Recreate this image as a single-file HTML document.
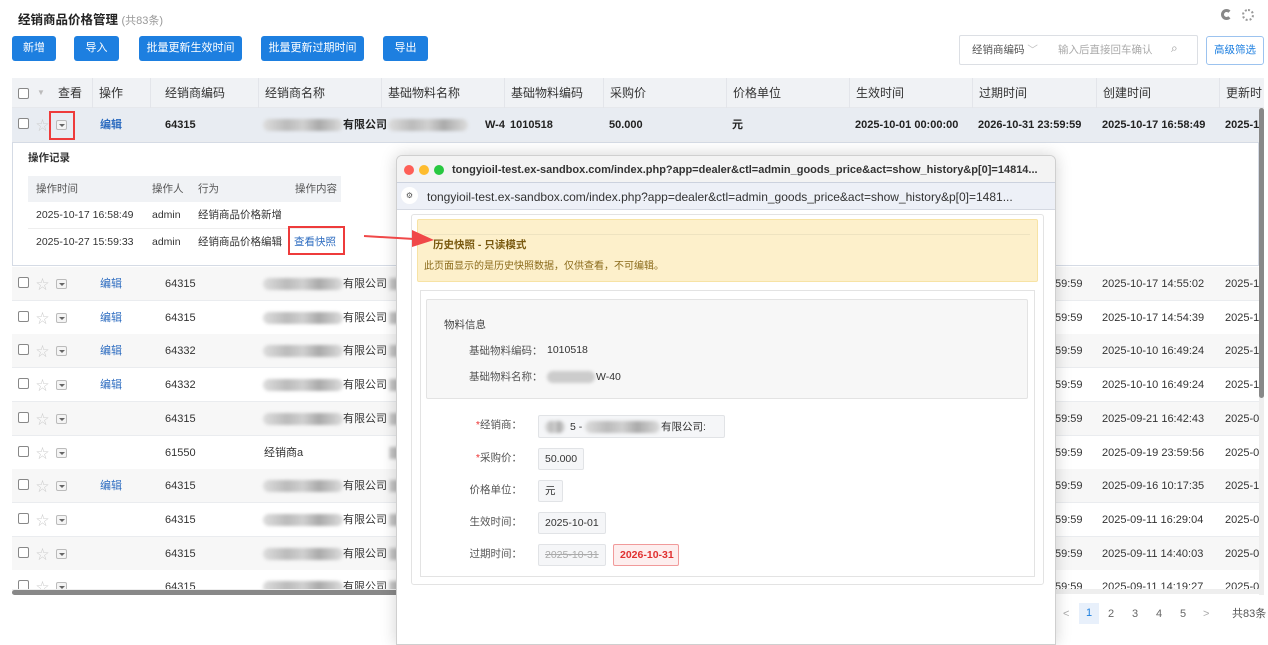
<!DOCTYPE html>
<html><head><meta charset="utf-8"><style>
*{box-sizing:border-box;margin:0;padding:0}
body{width:1268px;height:636px;overflow:hidden;background:#fff;font-family:"Liberation Sans","Noto Sans CJK SC",sans-serif;font-size:11px;color:#333;position:relative}
.a{position:absolute;white-space:nowrap;line-height:14px}
.btn{position:absolute;top:36px;height:25px;background:#1d7fe0;color:#fff;border-radius:3px;font-size:11px;line-height:25px;text-align:center}
.hd{position:absolute;top:78px;left:12px;width:1252px;height:30px;background:#f0f2f5;border-bottom:1px solid #e6e8ec}
.th{position:absolute;top:78px;height:30px;line-height:30px;font-size:12px;color:#333;border-left:1px solid #e3e5ea;padding-left:6px}
.row{position:absolute;left:12px;width:1247px;height:34px;border-bottom:1px solid #eaecef}
.cb{position:absolute;width:11px;height:11px;border:1px solid #888;border-radius:2px;background:#fff}
.star{position:absolute;color:#ccc;font-size:13px}
.dd{position:absolute;width:11px;height:10px;border:1px solid #bbb;border-radius:2px;background:#f4f4f4}
.dd:after{content:"";position:absolute;left:2px;top:3px;border-left:3px solid transparent;border-right:3px solid transparent;border-top:3px solid #666}
.blur{position:absolute;height:12px;background:linear-gradient(90deg,#ddd,#bbb 30%,#d0d0d0 50%,#aaa 70%,#ddd);filter:blur(1.5px);border-radius:6px}
.ed{color:#2d6cc0}
.b{font-weight:600;color:#222}
.fl{position:absolute;font-size:10.5px;color:#555;text-align:right;width:80px;line-height:14px}
.fv{position:absolute;height:22px;border:1px solid #e1e3e6;background:#f5f6f8;border-radius:2px;line-height:20px;padding:0 6px;font-size:10.5px;color:#333}
</style></head><body>
<div class="a" style="left:18px;top:13px;font-size:12.5px;font-weight:bold;color:#222">经销商品价格管理 <span style="font-weight:normal;color:#999;font-size:11px">(共83条)</span></div>
<div class="a" style="left:1221px;top:9px;width:11px;height:11px;border-radius:50%;border:3px solid #888;border-right-color:transparent"></div>
<div class="a" style="left:1242px;top:9px;width:12px;height:12px;border-radius:50%;border:2px dotted #999"></div>
<div class="btn" style="left:12px;width:44px">新增</div>
<div class="btn" style="left:74px;width:45px">导入</div>
<div class="btn" style="left:139px;width:103px">批量更新生效时间</div>
<div class="btn" style="left:261px;width:103px">批量更新过期时间</div>
<div class="btn" style="left:383px;width:45px">导出</div>
<div class="a" style="left:959px;top:35px;width:239px;height:30px;border:1px solid #dcdfe4;border-radius:2px"></div>
<div class="a" style="left:972px;top:43px;color:#555;font-size:10.5px">经销商编码 <span style="color:#bbb">﹀</span></div>
<div class="a" style="left:1058px;top:43px;color:#aaa;font-size:10.5px">输入后直接回车确认</div>
<div class="a" style="left:1171px;top:41px;color:#999;font-size:12px">⌕</div>
<div class="a" style="left:1206px;top:36px;width:58px;height:29px;border:1px solid #9cc3ef;border-radius:3px;color:#1d7fe0;line-height:27px;text-align:center;font-size:10.5px">高级筛选</div>

<div class="hd"></div>
<div class="cb" style="left:18px;top:88px"></div><div class="a" style="left:37px;top:86px;color:#bbb;font-size:8px">▼</div>
<div class="th" style="left:44px;border:0;padding-left:14px">查看</div>
<div class="th" style="left:92px">操作</div>
<div class="th" style="left:150px;padding-left:14px">经销商编码</div>
<div class="th" style="left:258px">经销商名称</div>
<div class="th" style="left:381px">基础物料名称</div>
<div class="th" style="left:504px">基础物料编码</div>
<div class="th" style="left:603px">采购价</div>
<div class="th" style="left:726px">价格单位</div>
<div class="th" style="left:849px">生效时间</div>
<div class="th" style="left:972px">过期时间</div>
<div class="th" style="left:1096px">创建时间</div>
<div class="th" style="left:1219px">更新时</div>

<div class="row" style="top:108px;background:#e8ecf2;height:34px"></div>
<div class="cb" style="left:18px;top:118px"></div><div class="star" style="left:36px;top:115px">☆</div><div class="dd" style="left:56px;top:120px"></div>
<div class="a b" style="top:118px;left:100px;color:#2d6cc0">编辑</div>
<div class="a b" style="top:118px;left:165px">64315</div>
<div class="blur" style="left:263px;top:119px;width:80px"></div><div class="a b" style="top:118px;left:343px">有限公司</div>
<div class="blur" style="left:388px;top:119px;width:80px"></div><div class="a b" style="top:118px;left:485px">W-4</div>
<div class="a b" style="top:118px;left:510px">1010518</div>
<div class="a b" style="top:118px;left:609px">50.000</div>
<div class="a b" style="top:118px;left:732px">元</div>
<div class="a b" style="top:118px;left:855px">2025-10-01 00:00:00</div>
<div class="a b" style="top:118px;left:978px">2026-10-31 23:59:59</div>
<div class="a b" style="top:118px;left:1102px">2025-10-17 16:58:49</div>
<div class="a b" style="top:118px;left:1225px">2025-1</div>
<div class="a" style="left:49px;top:111px;width:26px;height:29px;border:2px solid #ee3b3b"></div>

<div class="a" style="left:12px;top:142px;width:1247px;height:124px;border:1px solid #d5dbe5;background:#fff"></div>
<div class="a" style="left:28px;top:151px;font-weight:bold;font-size:10.5px">操作记录</div>
<div class="a" style="left:28px;top:176px;width:313px;height:26px;background:#f0f2f5"></div>
<div class="a" style="left:36px;top:182px;font-size:10.5px;color:#555">操作时间</div>
<div class="a" style="left:152px;top:182px;font-size:10.5px;color:#555">操作人</div>
<div class="a" style="left:198px;top:182px;font-size:10.5px;color:#555">行为</div>
<div class="a" style="left:295px;top:182px;font-size:10.5px;color:#555">操作内容</div>
<div class="a" style="left:28px;top:228px;width:313px;border-top:1px solid #eee"></div>
<div class="a" style="left:36px;top:208px;font-size:10.5px">2025-10-17 16:58:49</div><div class="a" style="left:152px;top:208px;font-size:10.5px">admin</div><div class="a" style="left:198px;top:208px;font-size:10.5px">经销商品价格新增</div>
<div class="a" style="left:36px;top:235px;font-size:10.5px">2025-10-27 15:59:33</div><div class="a" style="left:152px;top:235px;font-size:10.5px">admin</div><div class="a" style="left:198px;top:235px;font-size:10.5px">经销商品价格编辑</div>
<div class="a ed" style="left:294px;top:235px;font-size:10.5px">查看快照</div>
<div class="a" style="left:288px;top:226px;width:57px;height:29px;border:2px solid #ee3b3b"></div>

<div id="rows"></div>
<script>
var d=[["64315",1,"2025-10-17 14:55:02","2025-1"],["64315",1,"2025-10-17 14:54:39","2025-1"],["64332",1,"2025-10-10 16:49:24","2025-1"],["64332",1,"2025-10-10 16:49:24","2025-1"],["64315",0,"2025-09-21 16:42:43","2025-0"],["61550",0,"2025-09-19 23:59:56","2025-0"],["64315",1,"2025-09-16 10:17:35","2025-1"],["64315",0,"2025-09-11 16:29:04","2025-0"],["64315",0,"2025-09-11 14:40:03","2025-0"],["64315",0,"2025-09-11 14:19:27","2025-0"]];
var h="";d.forEach(function(r,i){var t=267+i*33.7;var c=t+10;
h+='<div class="row" style="top:'+t+'px;background:'+(i%2?'#fff':'#f7f7f7')+'"></div>';
h+='<div class="cb" style="left:18px;top:'+(c)+'px"></div><div class="star" style="left:36px;top:'+(c-3)+'px">☆</div><div class="dd" style="left:56px;top:'+(c+2)+'px"></div>';
if(r[1])h+='<div class="a ed" style="left:100px;top:'+c+'px">编辑</div>';
h+='<div class="a" style="left:165px;top:'+c+'px">'+r[0]+'</div>';
if(i==5)h+='<div class="a" style="left:264px;top:'+c+'px">经销商a</div>';else h+='<div class="blur" style="left:263px;top:'+(c+1)+'px;width:80px"></div><div class="a" style="left:343px;top:'+c+'px">有限公司</div>';
h+='<div class="blur" style="left:389px;top:'+(c+1)+'px;width:10px;border-radius:0"></div>';
h+='<div class="a" style="left:1055px;top:'+c+'px">59:59</div><div class="a" style="left:1102px;top:'+c+'px">'+r[2]+'</div><div class="a" style="left:1225px;top:'+c+'px">'+r[3]+'</div>';
});document.getElementById("rows").innerHTML=h;
</script>
<div class="a" style="left:0;top:594px;width:1268px;height:42px;background:#fff"></div>
<div class="a" style="left:12px;top:589px;width:1247px;height:5px;background:#eee"></div>
<div class="a" style="left:12px;top:590px;width:390px;height:5px;background:#888;border-radius:3px"></div>
<div class="a" style="left:1259px;top:108px;width:5px;height:487px;background:#eee"></div>
<div class="a" style="left:1259px;top:108px;width:5px;height:290px;background:#888;border-radius:3px"></div>
<div class="a" style="left:1063px;top:607px;color:#aaa">&lt;</div>
<div class="a" style="left:1079px;top:603px;width:20px;height:21px;background:#e8f0fb;color:#1d7fe0;text-align:center;line-height:21px">1</div>
<div class="a" style="left:1108px;top:607px;color:#666">2</div><div class="a" style="left:1132px;top:607px;color:#666">3</div><div class="a" style="left:1156px;top:607px;color:#666">4</div><div class="a" style="left:1180px;top:607px;color:#666">5</div><div class="a" style="left:1203px;top:607px;color:#aaa">&gt;</div>
<div class="a" style="left:1232px;top:607px;color:#555">共83条</div>

<!-- popup -->
<div class="a" style="left:396px;top:155px;width:660px;height:490px;background:#fff;border:1px solid #cfcfcf;border-radius:6px 6px 0 0;box-shadow:0 0 16px rgba(0,0,0,.18);overflow:hidden">
 <div class="a" style="left:0;top:0;width:660px;height:27px;background:#f3f3f3;border-bottom:1px solid #ccd2de"></div>
 <div class="a" style="left:7px;top:9px;width:10px;height:10px;border-radius:50%;background:#fe5f57"></div>
 <div class="a" style="left:22px;top:9px;width:10px;height:10px;border-radius:50%;background:#febc2e"></div>
 <div class="a" style="left:37px;top:9px;width:10px;height:10px;border-radius:50%;background:#28c840"></div>
 <div class="a" style="left:55px;top:7px;font-size:11px;font-weight:bold;color:#333">tongyioil-test.ex-sandbox.com/index.php?app=dealer&amp;ctl=admin_goods_price&amp;act=show_history&amp;p[0]=14814...</div>
 <div class="a" style="left:0;top:27px;width:660px;height:27px;background:#edf0f7;border-bottom:1px solid #d5d9e2"></div>
 <div class="a" style="left:4px;top:31px;width:17px;height:17px;border-radius:50%;background:#fff;font-size:8px;text-align:center;line-height:17px;color:#555">⚙</div>
 <div class="a" style="left:30px;top:34px;font-size:12px;color:#333">tongyioil-test.ex-sandbox.com/index.php?app=dealer&amp;ctl=admin_goods_price&amp;act=show_history&amp;p[0]=1481...</div>
 <div class="a" style="left:14px;top:58px;width:633px;height:371px;border:1px solid #e3e3e3;border-radius:3px"></div>
 <div class="a" style="left:20px;top:63px;width:621px;height:63px;background:#fdf0cb;border:1px solid #f7e3a5;border-radius:2px"></div>
 <div class="a" style="left:27px;top:78px;width:606px;border-top:1px solid #eee3c0"></div>
 <div class="a" style="left:36px;top:82px;font-size:10.5px;font-weight:bold;color:#7a5a10">历史快照 - 只读模式</div>
 <div class="a" style="left:27px;top:104px;font-size:10px;color:#8a6a1a">此页面显示的是历史快照数据，仅供查看，不可编辑。</div>
 <div class="a" style="left:23px;top:134px;width:615px;height:287px;border:1px solid #e3e3e3"></div>
 <div class="a" style="left:29px;top:143px;width:602px;height:100px;background:#f7f7f7;border:1px solid #e3e3e3;border-radius:2px"></div>
 <div class="a" style="left:47px;top:162px;font-size:10.5px;color:#444">物料信息</div>
 <div class="a" style="left:72px;top:188px;font-size:10.5px;color:#555">基础物料编码：</div><div class="a" style="left:150px;top:187px;font-size:10.5px">1010518</div>
 <div class="a" style="left:72px;top:214px;font-size:10.5px;color:#555">基础物料名称：</div><div class="blur" style="left:150px;top:215px;width:48px;background:#ccc"></div><div class="a" style="left:199px;top:214px;font-size:10.5px">W-40</div>
 <div class="fl" style="left:45px;top:262px"><span style="color:#e33">*</span>经销商：</div>
 <div class="fv" style="left:141px;top:259px;width:187px;height:23px"><span class="blur" style="left:6px;top:5px;width:20px"></span><span style="position:absolute;left:31px;top:1px">5 -</span><span class="blur" style="left:46px;top:5px;width:75px"></span><span style="position:absolute;left:122px;top:1px">有限公司:</span></div>
 <div class="fl" style="left:45px;top:295px"><span style="color:#e33">*</span>采购价：</div>
 <div class="fv" style="left:141px;top:292px">50.000</div>
 <div class="fl" style="left:45px;top:327px">价格单位：</div>
 <div class="fv" style="left:141px;top:324px">元</div>
 <div class="fl" style="left:45px;top:359px">生效时间：</div>
 <div class="fv" style="left:141px;top:356px">2025-10-01</div>
 <div class="fl" style="left:45px;top:391px">过期时间：</div>
 <div class="fv" style="left:141px;top:388px;color:#aaa;text-decoration:line-through">2025-10-31</div>
 <div class="fv" style="left:216px;top:388px;background:#fdeeee;border-color:#f19a9a;color:#e03030;font-weight:bold;width:66px">2026-10-31</div>
</div>
<svg class="a" style="left:362px;top:228px" width="74" height="20"><line x1="2" y1="8" x2="52" y2="11" stroke="#f04848" stroke-width="2"/><polygon points="50,2 72,12 50,19" fill="#f04848"/></svg>
</body></html>
